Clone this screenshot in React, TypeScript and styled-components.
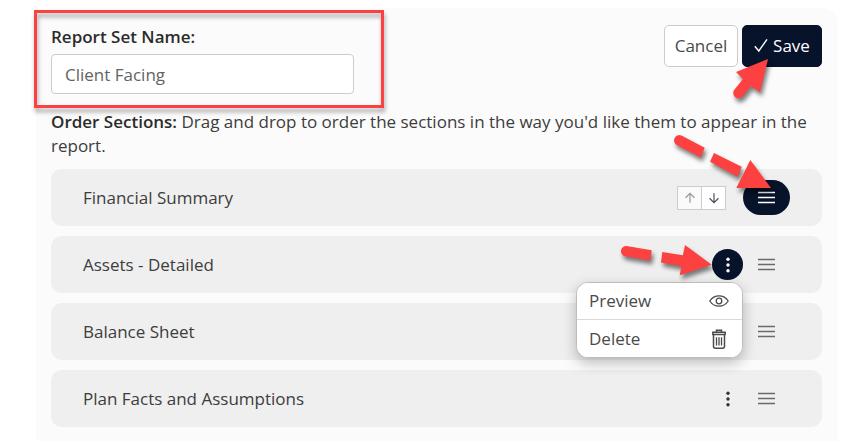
import React from "react";
import styled, { createGlobalStyle } from "styled-components";

const navy = "#07122b";
const red = "#fd4040";

const GlobalStyle = createGlobalStyle`
  *, *::before, *::after { box-sizing: border-box; }
  body {
    margin: 0;
    background: #fff;
    color: #3d3d3d;
    font: 17px/24px "Open Sans", "Noto Sans", sans-serif;
  }
  button, input { font: inherit; color: inherit; }
  button { cursor: pointer; }
`;

const Panel = styled.main`
  min-height: calc(100vh - 8px);
  margin: 8px 3px 0 36px;
  padding: 17px 16px 14px 15px;
  background: #fbfbfb;
  border-radius: 16px 16px 0 0;
`;

const Header = styled.header`
  display: flex;
  justify-content: space-between;
  align-items: flex-start;
  gap: 24px;
`;

const Field = styled.div`
  position: relative;
  display: flex;
  flex-direction: column;
  gap: 5px;
  flex: 0 1 303px;
`;

const Label = styled.label`
  font-weight: 600;
  color: #2b2b2b;
`;

const TextInput = styled.input`
  width: 100%;
  height: 40px;
  padding: 0 13px;
  border: 1px solid #ccc;
  border-radius: 4px;
  background: #fff;
  color: #636363;
`;

const Highlight = styled.div`
  position: absolute;
  inset: -15px -30px -14px -17px;
  border: 3px solid ${red};
  filter: drop-shadow(1px 4px 2px rgba(0, 0, 0, 0.35));
  pointer-events: none;
`;

const Actions = styled.div`
  display: flex;
  gap: 4px;
`;

const Anchor = styled.div`
  position: relative;
  display: flex;
`;

const Button = styled.button<{ $primary?: boolean }>`
  display: flex;
  align-items: center;
  justify-content: center;
  gap: 5px;
  height: 42px;
  min-width: ${(p) => (p.$primary ? 80 : 74)}px;
  padding: 0;
  border: 1px solid ${(p) => (p.$primary ? navy : "#ccc")};
  border-radius: 5px;
  background: ${(p) => (p.$primary ? navy : "#fff")};
  color: ${(p) => (p.$primary ? "#fff" : "#4a4a4a")};
`;

const Intro = styled.p`
  margin: 16px 0 11px;
`;

const Lead = styled.strong`
  font-weight: 600;
  color: #2b2b2b;
`;

const Sections = styled.ul`
  display: flex;
  flex-direction: column;
  gap: 10px;
  margin: 0;
  padding: 0;
  list-style: none;
`;

const Row = styled.li`
  display: flex;
  align-items: center;
  height: 57px;
  padding: 0 32px;
  border-radius: 11px;
  background: #efefef;
`;

const RowTitle = styled.span`
  flex: 1;
`;

const MoveGroup = styled.div`
  display: flex;
  margin-right: 17px;
`;

const MoveButton = styled.button`
  display: grid;
  place-items: center;
  width: 25px;
  height: 24px;
  padding: 0;
  border: 1px solid #ccc;
  background: #fff;
  color: #4f4f5c;

  & + & { margin-left: -1px; }

  &:disabled {
    background: #fafafa;
    color: #999;
  }
`;

const IconButton = styled.button<{ $active?: boolean; $wide?: boolean }>`
  display: grid;
  place-items: center;
  width: ${(p) => (p.$wide ? 47 : 31)}px;
  height: ${(p) => (p.$wide ? 35 : 31)}px;
  padding: 0;
  border: 0;
  border-radius: 18px;
  background: ${(p) => (p.$active ? navy : "transparent")};
  color: ${(p) => (p.$active ? "#fff" : p.$wide ? "#6a6a6a" : "#333")};
`;

const Menu = styled.div`
  position: absolute;
  z-index: 2;
  top: 33px;
  right: 0;
  width: 167px;
  overflow: hidden;
  border: 1px solid #bdbdbd;
  border-radius: 12px;
  background: #fff;
  box-shadow: 0 5px 14px rgba(0, 0, 0, 0.25);
`;

const MenuItem = styled.button`
  display: flex;
  align-items: center;
  justify-content: space-between;
  width: 100%;
  height: 36px;
  padding: 0 13px 0 12px;
  border: 0;
  background: #fff;
  color: #4a4a4a;

  & + & {
    height: 38px;
    border-top: 1px solid #d9d9d9;
  }
`;

const Pointer = styled.svg<{ $left: number; $top: number }>`
  position: absolute;
  z-index: 3;
  left: ${(p) => p.$left}px;
  top: ${(p) => p.$top}px;
  overflow: visible;
  fill: ${red};
  stroke: none;
  filter: drop-shadow(2px 4px 2px rgba(0, 0, 0, 0.5));
  pointer-events: none;
`;

const CheckIcon = () => (
  <svg width="14" height="16" viewBox="0 0 14 16" fill="none" stroke="currentColor" strokeWidth="1.4" aria-hidden="true">
    <path d="M.8 8.2 4.8 13 13 1.4" />
  </svg>
);

const ArrowIcon = ({ down = false }: { down?: boolean }) => (
  <svg width="12" height="12" viewBox="0 0 12 12" fill="none" stroke="currentColor" strokeWidth="1.2" aria-hidden="true">
    <path d={down ? "M6 1.2v9.3M1.5 6.2 6 10.6l4.5-4.4" : "M6 10.8V1.5M1.5 5.8 6 1.4l4.5 4.4"} />
  </svg>
);

const DragIcon = () => (
  <svg width="17" height="13" viewBox="0 0 17 13" fill="none" stroke="currentColor" strokeWidth="1.5" aria-hidden="true">
    <path d="M0 1.5h17M0 6.5h17M0 11.5h17" />
  </svg>
);

const KebabIcon = () => (
  <svg width="4" height="16" viewBox="0 0 4 16" fill="currentColor" aria-hidden="true">
    <circle cx="2" cy="2.2" r="1.7" />
    <circle cx="2" cy="8" r="1.7" />
    <circle cx="2" cy="13.8" r="1.7" />
  </svg>
);

const EyeIcon = () => (
  <svg width="20" height="12" viewBox="0 0 20 12" fill="none" stroke="currentColor" strokeWidth="1.3" aria-hidden="true">
    <path d="M.8 6C3 2.6 6.3.8 10 .8S17 2.6 19.2 6C17 9.4 13.7 11.2 10 11.2S3 9.4.8 6Z" />
    <circle cx="10" cy="6" r="2.8" />
  </svg>
);

const TrashIcon = () => (
  <svg width="20" height="20" viewBox="0 0 20 20" fill="none" stroke="currentColor" strokeWidth="1.5" aria-hidden="true">
    <path d="M7.5 2.8V1.2h5v1.6M3.8 5.6V3.2h12.4v2.4M4.5 5.6v11.6a2 2 0 0 0 2 2h7a2 2 0 0 0 2-2V5.6M3.2 5.6h13.6" />
    <path d="M7.5 8.200v8.300M10 8.200v8.300M12.500 8.200v8.300" strokeWidth="1.3" />
  </svg>
);

const SavePointer = () => (
  <Pointer $left={-16} $top={29} width="48" height="50" viewBox="0 0 48 50" aria-hidden="true">
    <path d="M42 5 10 18l7 7L8.500 35.500a5.300 5.300 0 0 0 8 7L25 32l9 6.300Z" />
  </Pointer>
);

const DragPointer = () => (
  <Pointer $left={-73} $top={-50} width="104" height="62" viewBox="0 0 104 62" aria-hidden="true">
    <path d="m11.500 5.500 23.200 12.200-4 9.800L7.300 15.300a5.300 5.300 0 0 1 4.200-9.800ZM44 23l27.700 13.700-4 10L40 31.700ZM80.300 30 101 58H66.300Z" />
  </Pointer>
);

const MenuPointer = () => (
  <Pointer $left={-100} $top={-10} width="104" height="40" viewBox="0 0 104 40" aria-hidden="true">
    <path d="m14.400 6.900 25.300 4.400-1.300 10.300-25.200-4.300a5.250 5.250 0 0 1 1.200-10.400ZM50.300 13l20.600 3.300 2.100-10.300 26.700 19.700-32 10.600 1.800-9-20.500-3.900Z" />
  </Pointer>
);

type Section = { name: string; movable?: boolean; open?: boolean };

const sections: Section[] = [
  { name: "Financial Summary", movable: true },
  { name: "Assets - Detailed", open: true },
  { name: "Balance Sheet" },
  { name: "Plan Facts and Assumptions" },
];

function SectionRow({ name, movable, open }: Section) {
  return (
    <Row>
      <RowTitle>{name}</RowTitle>
      {movable ? (
        <MoveGroup>
          <MoveButton type="button" disabled aria-label={`Move ${name} up`}>
            <ArrowIcon />
          </MoveButton>
          <MoveButton type="button" aria-label={`Move ${name} down`}>
            <ArrowIcon down />
          </MoveButton>
        </MoveGroup>
      ) : (
        <Anchor>
          <IconButton type="button" $active={open} aria-expanded={!!open} aria-label={`${name} options`}>
            <KebabIcon />
          </IconButton>
          {open && (
            <>
              <Menu>
                <MenuItem type="button">
                  Preview
                  <EyeIcon />
                </MenuItem>
                <MenuItem type="button">
                  Delete
                  <TrashIcon />
                </MenuItem>
              </Menu>
              <MenuPointer />
            </>
          )}
        </Anchor>
      )}
      <Anchor>
        <IconButton type="button" $wide $active={movable} aria-label={`Drag ${name}`}>
          <DragIcon />
        </IconButton>
        {movable && <DragPointer />}
      </Anchor>
    </Row>
  );
}

export default function App() {
  return (
    <>
      <GlobalStyle />
      <Panel>
        <Header>
          <Field>
            <Label htmlFor="set-name">Report Set Name:</Label>
            <TextInput id="set-name" type="text" defaultValue="Client Facing" />
            <Highlight />
          </Field>
          <Actions>
            <Button type="button">Cancel</Button>
            <Anchor>
              <Button type="button" $primary>
                <CheckIcon />
                Save
              </Button>
              <SavePointer />
            </Anchor>
          </Actions>
        </Header>
        <Intro>
          <Lead>Order Sections:</Lead> Drag and drop to order the sections in the way you'd like them to
          appear in the report.
        </Intro>
        <Sections>
          {sections.map((s) => (
            <SectionRow key={s.name} {...s} />
          ))}
        </Sections>
      </Panel>
    </>
  );
}
